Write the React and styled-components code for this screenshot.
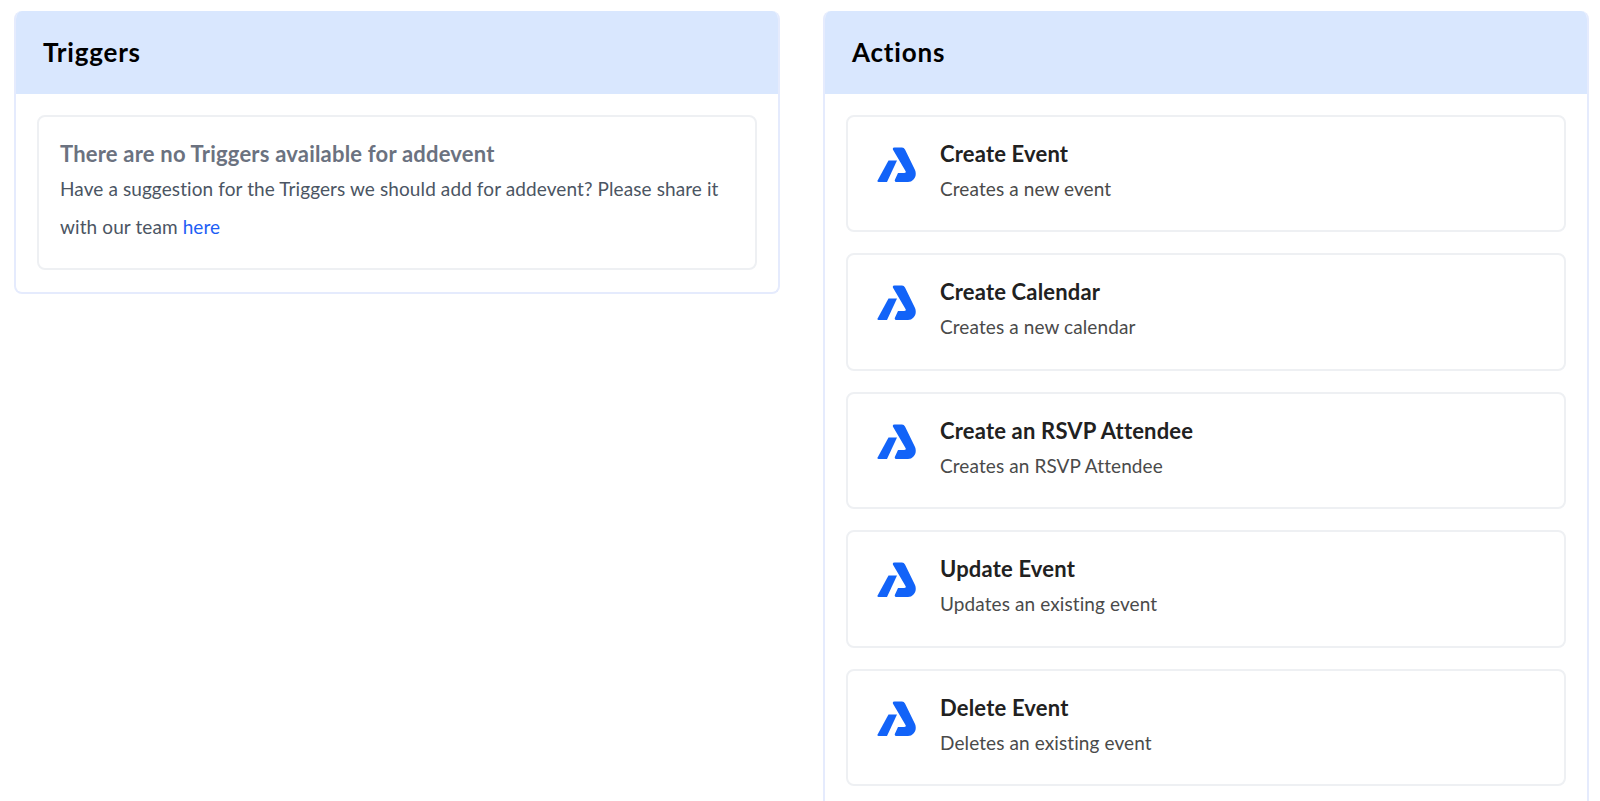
import React from "react";
import styled, { createGlobalStyle } from "styled-components";

const GlobalStyle = createGlobalStyle`
  html, body {
    margin: 0;
    height: 100%;
    overflow: hidden;
    background: #fff;
    font-family: "Lato", "Open Sans", sans-serif;
    font-variant-ligatures: none;
  }
`;

const actions = [
  { title: "Create Event", text: "Creates a new event" },
  { title: "Create Calendar", text: "Creates a new calendar" },
  { title: "Create an RSVP Attendee", text: "Creates an RSVP Attendee" },
  { title: "Update Event", text: "Updates an existing event" },
  { title: "Delete Event", text: "Deletes an existing event" },
];

const Logo = () => (
  <LogoSvg viewBox="0 0 39 36" aria-hidden="true">
    <path d="M11.5 13.5H20L10 35H1.6Q0 35 .6 33.4Z" />
    <path d="M17.5.5H25Q27 .5 28 2.5L38 23C40.5 29 36.5 35 31 35H19.5Q17 35 18 32.4L21 26H27Q29.5 26 28.5 24L16 2.8Q15.2.5 17.5.5Z" />
  </LogoSvg>
);

const App = () => (
  <Page>
    <GlobalStyle />
    <Panel>
      <PanelHeader>Triggers</PanelHeader>
      <PanelBody>
        <EmptyCard>
          <EmptyTitle>There are no Triggers available for addevent</EmptyTitle>
          <EmptyText>
            Have a suggestion for the Triggers we should add for addevent? Please share it with our
            team <a href="#here">here</a>
          </EmptyText>
        </EmptyCard>
      </PanelBody>
    </Panel>
    <Panel>
      <PanelHeader>Actions</PanelHeader>
      <PanelBody>
        {actions.map((a) => (
          <ActionCard key={a.title}>
            <Logo />
            <div>
              <ActionTitle>{a.title}</ActionTitle>
              <ActionText>{a.text}</ActionText>
            </div>
          </ActionCard>
        ))}
      </PanelBody>
    </Panel>
  </Page>
);

export default App;

const Page = styled.div`
  display: grid;
  grid-template-columns: 766px 766px;
  column-gap: 43px;
  align-items: start;
  padding: 11px 0 0 14px;
`;

const Panel = styled.section`
  border: 2px solid #e5ebfd;
  border-top: 0;
  border-radius: 8px;
  overflow: hidden;
`;

const PanelHeader = styled.h2`
  margin: 0 -2px;
  height: 83px;
  box-sizing: border-box;
  padding: 0 0 2px 29px;
  display: flex;
  align-items: center;
  background: #d9e7fe;
  color: #000;
  font-size: 26px;
  font-weight: 700;
  letter-spacing: 0.8px;
`;

const PanelBody = styled.div`
  display: flex;
  flex-direction: column;
  gap: 21px;
  padding: 21px 21px 22px 21px;
`;

const EmptyCard = styled.div`
  border: 2px solid #eef0f3;
  border-radius: 8px;
  padding: 24px 20px 12px 21px;
  height: 155px;
  box-sizing: border-box;
`;

const EmptyTitle = styled.div`
  color: #6b7280;
  font-size: 22px;
  font-weight: 700;
  line-height: 26px;
  letter-spacing: 0.2px;
`;

const EmptyText = styled.p`
  margin: 3px 0 0;
  color: #4b5563;
  font-size: 19px;
  line-height: 38px;
  letter-spacing: 0.1px;

  a {
    color: #1d5ef5;
    text-decoration: none;
  }
`;

const ActionCard = styled.div`
  display: flex;
  align-items: flex-start;
  height: 117.4px;
  box-sizing: border-box;
  border: 2px solid #eef0f3;
  border-radius: 8px;
  padding: 24px 20px 0 29px;
`;

const LogoSvg = styled.svg`
  flex: none;
  width: 39px;
  height: 36px;
  margin: 6px 24px 0 0;
  fill: #1263f8;
`;

const ActionTitle = styled.div`
  color: #212121;
  font-size: 22px;
  font-weight: 700;
  line-height: 26px;
  letter-spacing: 0.18px;
`;

const ActionText = styled.div`
  margin-top: 9px;
  color: #4a4a4a;
  font-size: 19px;
  line-height: 26px;
  letter-spacing: 0.1px;
`;
